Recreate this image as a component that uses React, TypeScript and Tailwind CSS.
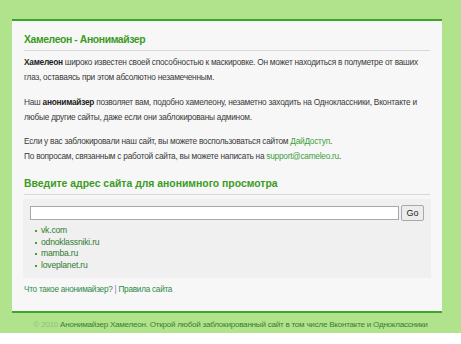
export default function App () {
  return (
    <div className="w-[461px] h-[344px] bg-white" style={{ fontFamily: '"Liberation Sans", Arial, sans-serif' }}>
      <div className="h-[333px] bg-[#b0e38c] pt-[19px]">
        <div className="mx-[12px] w-[430px] bg-[#f7f7f7] border-t-[2px] border-b-[2px] border-[#3aa72a] px-[12px] pt-[12px] pb-[15px]">
          <h1 className="text-[10.4px] tracking-[-0.4px] font-bold text-[#3b9b1f] leading-[13px] pb-[4px] border-b border-[#d8d8d8]">Хамелеон - Анонимайзер</h1>
          <div className="text-[8.3px] tracking-[-0.25px] leading-[15px] text-[#3a3a3a] mt-[4px]">
            <p><b className="text-[#222]">Хамелеон</b> широко известен своей способностью к маскировке. Он может находиться в полуметре от ваших глаз, оставаясь при этом абсолютно незамеченным.</p>
            <p className="mt-[10px]">Наш <b className="text-[#222]">анонимайзер</b> позволяет вам, подобно хамелеону, незаметно заходить на Одноклассники, Вконтакте и любые другие сайты, даже если они заблокированы админом.</p>
            <p className="mt-[9px]">Если у вас заблокировали наш сайт, вы можете воспользоваться сайтом <a className="text-[#3ca03c]">ДайДоступ</a>.<br />По вопросам, связанным с работой сайта, вы можете написать на <a className="text-[#3ca03c]">support@cameleo.ru</a>.</p>
          </div>
          <h2 className="mt-[13px] text-[10.4px] font-bold text-[#3b9b1f] leading-[14px] pb-[3px] border-b border-[#d8d8d8]">Введите адрес сайта для анонимного просмотра</h2>
          <div className="mt-[4px] -mx-[1px] bg-[#f0f0f0] px-[7px] pt-[6px] pb-[6px]">
            <div className="flex items-center gap-[2px]">
              <input className="w-[369px] h-[14px] bg-white border border-[#a8a8a8]" />
              <button className="w-[23px] h-[16px] text-[9px] text-[#222] bg-[#ececec] border border-[#a8a8a8] rounded-[2px] leading-none">Go</button>
            </div>
            <ul className="mt-[4px] pl-[5px] text-[8.6px] tracking-[-0.2px] leading-[11.7px] text-[#2e7d2e]">
              {['vk.com', 'odnoklassniki.ru', 'mamba.ru', 'loveplanet.ru'].map(s => (
                <li key={s} className="flex items-center gap-[4px]"><span className="w-[2px] h-[2px] bg-[#3ca03c]" /><a>{s}</a></li>
              ))}
            </ul>
          </div>
          <div className="mt-[6px] text-[8.2px] tracking-[-0.25px] leading-[12px] text-[#2e8a4a]">
            <a>Что такое анонимайзер?</a> <span className="text-[#a070c0]">|</span> <a>Правила сайта</a>
          </div>
        </div>
        <p className="mt-[6px] text-center text-[8.1px] tracking-[-0.25px] text-[#3a7f2a]"><span className="text-[#8fbf7f]">© 2010</span> Анонимайзер Хамелеон. Открой любой заблокированный сайт в том числе Вконтакте и Одноклассники</p>
      </div>
    </div>
  )
}
